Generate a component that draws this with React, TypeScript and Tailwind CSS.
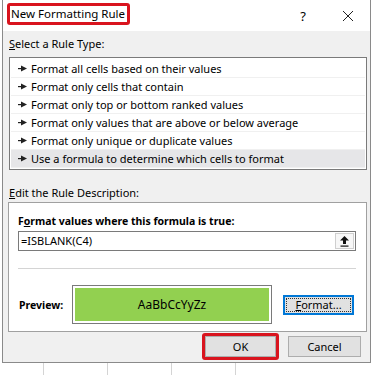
import React from "react";

const rules = [
  "Format all cells based on their values",
  "Format only cells that contain",
  "Format only top or bottom ranked values",
  "Format only values that are above or below average",
  "Format only unique or duplicate values",
  "Use a formula to determine which cells to format",
];

function Pointer() {
  return (
    <svg width="9" height="7" viewBox="0 0 9 7" className="shrink-0">
      <rect x="0" y="3" width="4" height="1.2" fill="#222" />
      <polygon points="3,0.5 9,3.6 3,6.5" fill="#222" />
    </svg>
  );
}

export default function App() {
  return (
    <div
      className="w-[375px] h-[375px] bg-white overflow-hidden text-[11px] text-black leading-[16px]"
      style={{ fontFamily: '"Noto Sans", "Open Sans", sans-serif' }}
    >
      <div className="ml-[2px] w-[369px] h-[363px] border-l border-r border-b border-[#8a8a8a] bg-[#f0f0f0] flex flex-col">
        {/* title bar */}
        <div className="h-[31px] bg-white flex items-start shrink-0">
          <div className="ml-[4px] mt-[3px] h-[22px] w-[123px] border-[3px] border-[#d9141e] rounded-[3px] flex items-center">
            <span className="pl-[1px] text-[11.5px] leading-[16px] whitespace-nowrap">New Formatting Rule</span>
          </div>
          <div className="ml-auto w-[46px] h-[31px] flex items-center justify-center text-[13px]">?</div>
          <div className="w-[44px] h-[31px] flex items-center justify-center">
            <svg width="12" height="12" viewBox="0 0 12 12">
              <path d="M1 1 L11 11 M11 1 L1 11" stroke="#222" strokeWidth="1" />
            </svg>
          </div>
        </div>

        {/* body */}
        <div className="pl-[6px] pr-[3px] flex flex-col">
          <div className="mt-[5px]">
            <span className="underline">S</span>elect a Rule Type:
          </div>
          <div className="mt-[5px] border border-[#7a7a7a] bg-white pt-[2px] pb-[1px] px-[1px]">
            {rules.map((r, i) => (
              <div
                key={r}
                className={
                  "h-[18px] flex items-center gap-[4px] pl-[7px] border-b border-[#f0f0f0] " +
                  (i === rules.length - 1 ? "bg-[#e6e6e8]" : "")
                }
              >
                <Pointer />
                <span>{r}</span>
              </div>
            ))}
          </div>

          <div className="mt-[15px]">
            <span className="underline">E</span>dit the Rule Description:
          </div>
          <div className="mt-[1px] -ml-px h-[130px] border border-[#a0a0a0] bg-white pl-[9px] pr-[10px] pt-[10px] flex flex-col">
            <div className="font-bold text-[10.5px]">
              F<span className="underline">o</span>rmat values where this formula is true:
            </div>
            <div className="mt-[2px] h-[20px] border border-[#7a7a7a] flex items-center">
              <span className="pl-[2px]">=ISBLANK(C4)</span>
              <div className="ml-auto mr-[1px] h-[16px] w-[19px] border border-[#cfcfcf] bg-[#f7f7f7] flex items-center justify-center">
                <svg width="9" height="11" viewBox="0 0 9 11">
                  <polygon points="4.5,0 9,4.5 6,4.5 6,8 3,8 3,4.5 0,4.5" fill="#111" />
                  <rect x="0.5" y="9.5" width="8" height="1.2" fill="#111" />
                </svg>
              </div>
            </div>
            <div className="mt-[17px] h-px bg-[#d4d4d4]" />
            <div className="mt-[16px] flex items-center">
              <div className="w-[54px] pl-[1px] font-bold text-[10.5px]">Preview:</div>
              <div className="w-[200px] h-[39px] border border-[#7a7a7a] p-[2px]">
                <div className="w-full h-full bg-[#92d050] flex items-center justify-center text-[12px]">
                  AaBbCcYyZz
                </div>
              </div>
              <div className="ml-[11px] w-[71px] h-[20px] border-2 border-[#0078d7] bg-[#e1e1e1] p-px">
                <div className="w-full h-full border border-dotted border-[#333] flex items-center justify-center">
                  <span>
                    <span className="underline">F</span>ormat...
                  </span>
                </div>
              </div>
            </div>
          </div>

          <div className="mt-px pr-[6px] flex items-center justify-end">
            <div className="w-[77px] h-[27px] border-[3px] border-[#d9141e] rounded-[3px]">
              <div className="w-full h-full bg-[#e1e1e1] border border-[#adadad] flex items-center justify-center">
                OK
              </div>
            </div>
            <div className="ml-[9px] w-[73px] h-[21px] bg-[#e1e1e1] border border-[#adadad] flex items-center justify-center">
              Cancel
            </div>
          </div>
        </div>
      </div>

      {/* spreadsheet grid under the dialog */}
      <div className="flex h-[12px]">
        <div className="w-[44px] border-r border-[#d4d4d4]" />
        <div className="w-[64px] border-r border-[#d4d4d4]" />
        <div className="w-[64px] border-r border-[#d4d4d4]" />
        <div className="w-[64px] border-r border-[#d4d4d4]" />
      </div>
    </div>
  );
}
